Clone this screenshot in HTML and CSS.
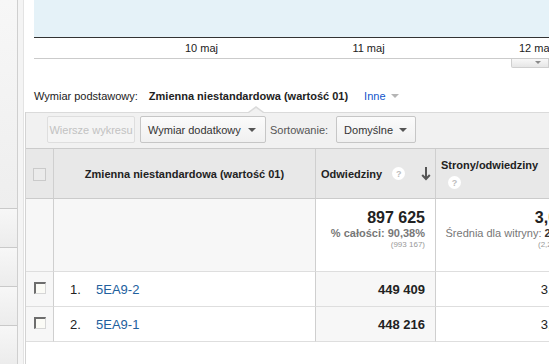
FILE: index.html
```html
<!DOCTYPE html>
<html lang="pl">
<head>
<meta charset="UTF-8">
<title>Raport niestandardowy</title>
<link rel="stylesheet" href="styles.css">
</head>
<body>
<div class="page">
  <aside class="sidebar">
    <div class="nav-top"></div>
    <div class="nav-item"></div>
    <div class="nav-item"></div>
    <div class="nav-item"></div>
    <div class="nav-item"></div>
  </aside>
  <div class="gutter"></div>

  <main class="main">
    <section class="chart">
      <div class="plot"></div>
      <div class="axis">
        <span>10 maj</span>
        <span>11 maj</span>
        <span>12 maj</span>
      </div>
      <div class="chart-foot">
        <span class="chart-tab"><i class="tri tri-light"></i></span>
      </div>
    </section>

    <div class="dimension">
      <span>Wymiar podstawowy:</span>
      <b>Zmienna niestandardowa (wartość 01)</b>
      <a href="#" class="other">Inne</a>
      <i class="tri tri-pale"></i>
    </div>

    <section class="report">
      <div class="toolbar">
        <span class="btn btn-disabled">Wiersze wykresu</span>
        <span class="btn btn-dim">Wymiar dodatkowy <i class="tri"></i></span>
        <span class="sort-label">Sortowanie:</span>
        <span class="btn btn-sort">Domyślne <i class="tri"></i></span>
      </div>

      <table class="data">
        <thead>
          <tr>
            <th class="c-check"><span class="check check-head"></span></th>
            <th class="c-dim">Zmienna niestandardowa (wartość 01)</th>
            <th class="c-visits">
              <div class="metric-head">
                <span>Odwiedziny</span>
                <span class="help">?</span>
                <svg class="sort-arrow" width="10" height="15" viewBox="0 0 10 15">
                  <path d="M5 1 V13 M1.2 9 L5 13 L8.8 9" fill="none" stroke="#555" stroke-width="2"/>
                </svg>
              </div>
            </th>
            <th class="c-pages">
              Strony/odwiedziny
              <span class="help help-block">?</span>
            </th>
          </tr>
        </thead>
        <tbody>
          <tr class="total">
            <td class="cell-check"></td>
            <td class="total-dim"></td>
            <td>
              <div class="big">897 625</div>
              <div class="share">% całości: 90,38%</div>
              <div class="ref">(993 167)</div>
            </td>
            <td>
              <div class="big">3,01</div>
              <div class="avg">Średnia dla witryny: <b>2,92</b></div>
              <div class="ref">(2,25%)</div>
            </td>
          </tr>
          <tr class="row">
            <td class="cell-check"><span class="check"></span></td>
            <td class="name"><span class="idx">1.</span><a href="#">5EA9-2</a></td>
            <td class="num sorted">449 409</td>
            <td class="val">3,01</td>
          </tr>
          <tr class="row">
            <td class="cell-check"><span class="check"></span></td>
            <td class="name"><span class="idx">2.</span><a href="#">5EA9-1</a></td>
            <td class="num sorted">448 216</td>
            <td class="val">3,01</td>
          </tr>
        </tbody>
      </table>
    </section>
  </main>
</div>
</body>
</html>
```

FILE: styles.css
```css
* {
  margin: 0;
  padding: 0;
  box-sizing: border-box;
}

body {
  font-family: "Liberation Sans", Arial, sans-serif;
  font-size: 11px;
  color: #222;
  background: #fff;
  overflow: hidden;
}

.page {
  display: flex;
  height: 100vh;
}

/* left navigation strip */
.sidebar {
  width: 18px;
  flex-shrink: 0;
  display: flex;
  flex-direction: column;
  background: #f0f0f0;
  border-right: 1px solid #cfcfcf;
}

.nav-top {
  height: 220px;
  background: linear-gradient(#f7f7f7, #eeeeee);
}

.nav-item {
  height: 41px;
  border-top: 1px solid #c9c9c9;
  background: linear-gradient(#f7f7f7, #ececec);
}

.gutter {
  width: 6px;
  flex-shrink: 0;
  background: #f4f4f4;
  border-right: 1px solid #e3e3e3;
}

.main {
  flex: 1;
  min-width: 0;
  overflow: hidden;
  padding-left: 1px;
  display: flex;
  flex-direction: column;
}

/* chart */
.plot {
  margin-left: 9px;
  height: 38px;
  background: #e5f2f8;
  border-bottom: 1px solid #333;
}

.axis {
  margin-left: 9px;
  padding-left: 84px;
  height: 20px;
  display: flex;
  line-height: 20px;
  color: #222;
  white-space: nowrap;
}

.axis span {
  width: 167px;
  flex-shrink: 0;
  text-align: center;
}

.chart-foot {
  margin-left: 9px;
  height: 1px;
  border-top: 1px solid #cbcbcb;
  display: flex;
  justify-content: flex-end;
  align-items: flex-start;
}

.chart-tab {
  width: 38px;
  height: 9px;
  flex-shrink: 0;
  padding-left: 23px;
  padding-top: 2px;
  background: linear-gradient(#f8f8f8, #e6e6e6);
  border: 1px solid #cfcfcf;
  border-top: none;
  border-radius: 0 0 0 2px;
  display: flex;
  align-items: flex-start;
}

.tri {
  display: inline-block;
  width: 0;
  height: 0;
  border-left: 4px solid transparent;
  border-right: 4px solid transparent;
  border-top: 4px solid #555;
}

.tri-light {
  border-top-color: #8a8a8a;
  border-left-width: 3px;
  border-right-width: 3px;
  border-top-width: 3px;
}

.tri-pale {
  border-top-color: #b5b5b5;
  margin-left: 5px;
}

/* primary dimension line */
.dimension {
  height: 53px;
  padding: 30px 0 0 9px;
  line-height: 14px;
  display: flex;
  align-items: flex-start;
  white-space: nowrap;
}

.dimension b {
  margin-left: 11px;
}

.dimension .other {
  margin-left: 16px;
  color: #1155cc;
  text-decoration: none;
}

.dimension .tri-pale {
  margin-top: 5px;
}

/* report */
.report {
  flex: 1;
  border-left: 1px solid #d3d3d3;
}

.toolbar {
  position: relative;
  display: flex;
  align-items: center;
  padding: 3px 0 5px 21px;
  background: #f1f1f1;
  border-top: 1px solid #dadada;
  white-space: nowrap;
}

.toolbar::before,
.toolbar::after {
  content: "";
  position: absolute;
  width: 0;
  height: 0;
  border-left: 8px solid transparent;
  border-right: 8px solid transparent;
}

.toolbar::before {
  left: 222px;
  top: -7px;
  border-bottom: 6px solid #dadada;
}

.toolbar::after {
  left: 223px;
  top: -5px;
  border-left-width: 7px;
  border-right-width: 7px;
  border-bottom: 5px solid #f1f1f1;
}

.btn {
  height: 27px;
  display: flex;
  align-items: center;
  padding: 0 7px;
  border: 1px solid #c6c6c6;
  border-radius: 2px;
  background: linear-gradient(#fbfbfb, #f0f0f0);
  color: #333;
  overflow: hidden;
}

.btn .tri {
  margin-left: auto;
}

.btn-disabled {
  width: 88px;
  padding: 0 1px;
  justify-content: center;
  color: #c2c2c2;
  border-color: #dedede;
  background: #f4f4f4;
}

.btn-dim {
  width: 126px;
  margin-left: 5px;
  padding-right: 9px;
}

.sort-label {
  margin: 0 8px 0 4px;
  color: #555;
}

.btn-sort {
  width: 80px;
  padding-right: 8px;
}

/* table */
.data {
  width: 551px;
  table-layout: fixed;
  border-collapse: separate;
  border-spacing: 0;
  border-top: 1px solid #cbcbcb;
}

.data th,
.data td {
  border-right: 1px solid #cfcfcf;
  border-bottom: 1px solid #dedede;
}

.data thead th {
  height: 50px;
  background: #e8e8e8;
  border-bottom-color: #cbcbcb;
  vertical-align: middle;
  font-size: 11px;
  color: #222;
}

.c-check { width: 28px; }
.c-dim { width: 262px; text-align: center; }
.c-visits { width: 120px; padding: 0 4px 0 5px; text-align: left; }
.c-pages { width: 141px; padding: 0 5px; text-align: left; line-height: 14px; }

.metric-head {
  display: flex;
  align-items: center;
}

.help {
  display: inline-flex;
  align-items: center;
  justify-content: center;
  width: 13px;
  height: 13px;
  border-radius: 50%;
  background: #fff;
  color: #bdbdbd;
  font-size: 9px;
  font-weight: bold;
  margin-left: 10px;
}

.help-block {
  display: flex;
  margin: 4px 0 0 7px;
}

.sort-arrow {
  margin-left: auto;
}

.check {
  display: inline-block;
  width: 12px;
  height: 12px;
  border-style: solid;
  border-width: 2px 1px 1px 2px;
  border-color: #6d6d6d #d6d6d6 #d6d6d6 #6d6d6d;
  background: #fbfbf6;
  vertical-align: top;
}

.check-head {
  width: 13px;
  height: 13px;
  border: 1px solid #cacaca;
  background: #ebebeb;
  vertical-align: middle;
}

.cell-check {
  background: #f7f7f7;
  text-align: center;
  vertical-align: top;
  padding-top: 10px;
}

.data thead .c-check {
  text-align: center;
  padding-top: 2px;
}

.total td {
  height: 73px;
  vertical-align: top;
  text-align: right;
  padding: 10px 10px 0 0;
}

.total .total-dim {
  background: #f7f7f7;
}

.total .big {
  font-size: 16px;
  font-weight: bold;
  line-height: 18px;
  color: #222;
}

.total .share {
  line-height: 13px;
  font-weight: bold;
  color: #777;
}

.total .avg {
  line-height: 13px;
  color: #777;
  white-space: nowrap;
}

.total .avg b {
  color: #333;
}

.total .ref {
  font-size: 8px;
  line-height: 10px;
  color: #999;
}

.row td {
  height: 35px;
  font-size: 13px;
  vertical-align: middle;
}

.row .cell-check {
  vertical-align: top;
}

.name {
  padding-left: 16px;
  white-space: nowrap;
}

.idx {
  display: inline-block;
  width: 26px;
}

.name a {
  color: #22609d;
  text-decoration: none;
}

.num {
  text-align: right;
  padding-right: 10px;
  font-weight: bold;
}

.sorted {
  background: #f7f7f7;
}

.val {
  text-align: right;
  padding-right: 10px;
}
```
